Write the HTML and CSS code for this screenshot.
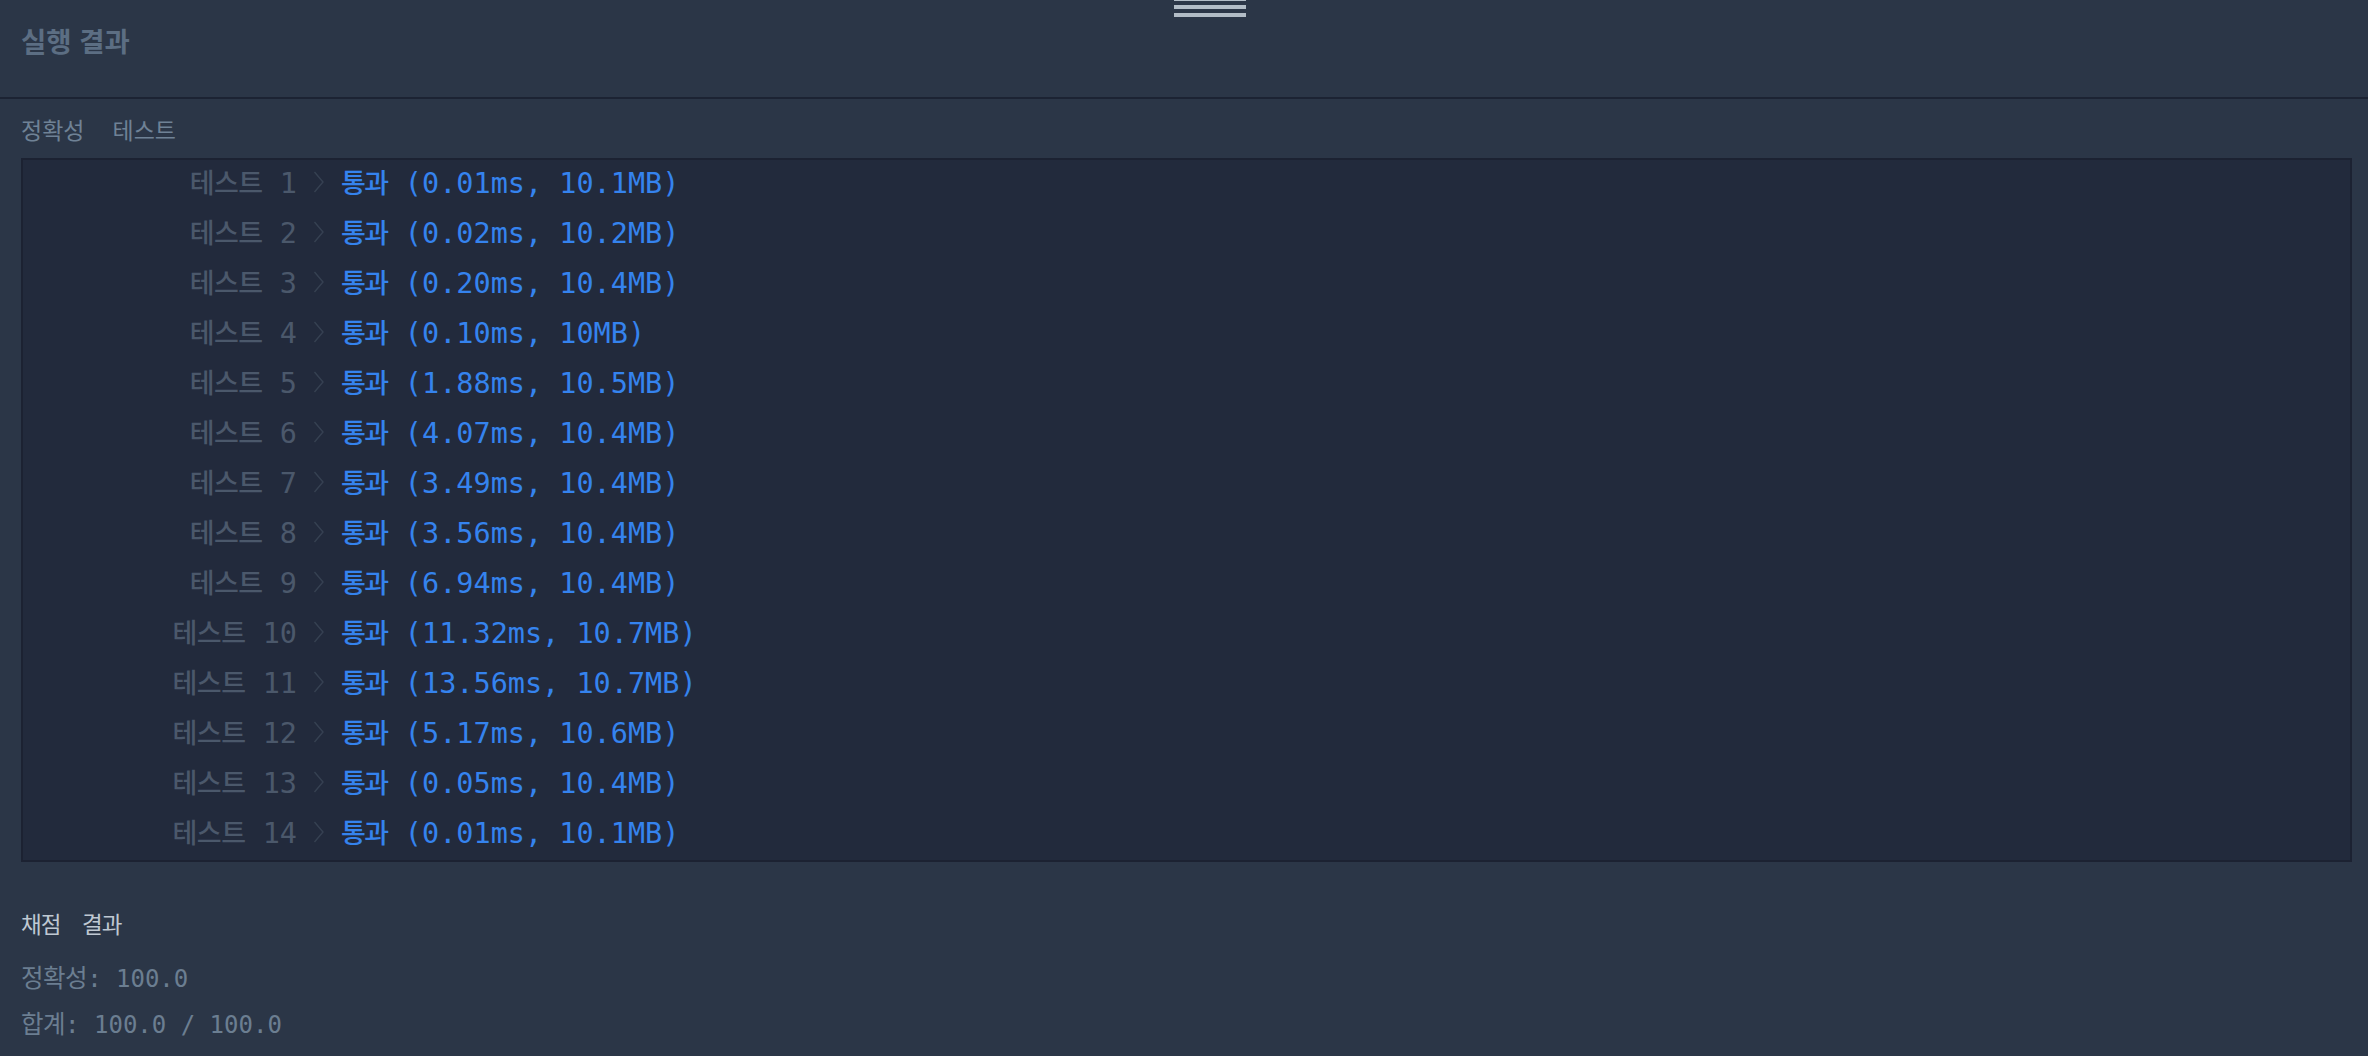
FILE: index.html
```html
<!DOCTYPE html>
<html lang="ko">
<head>
<meta charset="utf-8">
<title>실행 결과</title>
<link rel="stylesheet" href="styles.css">
</head>
<body>
<div class="handle"><i></i><i></i><i></i></div>
<header class="head"><h1 class="title">실행 결과</h1></header>
<nav class="tabs"><span class="tab">정확성</span><span class="tab">테스트</span></nav>
<section class="results">
  <div class="row"><span class="label"><span class="ko">테스트</span> 1</span><span class="chev"><svg width="12" height="22" viewBox="0 0 12 22"><polyline points="1.5,1 10,11 1.5,21"/></svg></span><span class="res"><span class="ko">통과</span> (0.01ms, 10.1MB)</span></div>
  <div class="row"><span class="label"><span class="ko">테스트</span> 2</span><span class="chev"><svg width="12" height="22" viewBox="0 0 12 22"><polyline points="1.5,1 10,11 1.5,21"/></svg></span><span class="res"><span class="ko">통과</span> (0.02ms, 10.2MB)</span></div>
  <div class="row"><span class="label"><span class="ko">테스트</span> 3</span><span class="chev"><svg width="12" height="22" viewBox="0 0 12 22"><polyline points="1.5,1 10,11 1.5,21"/></svg></span><span class="res"><span class="ko">통과</span> (0.20ms, 10.4MB)</span></div>
  <div class="row"><span class="label"><span class="ko">테스트</span> 4</span><span class="chev"><svg width="12" height="22" viewBox="0 0 12 22"><polyline points="1.5,1 10,11 1.5,21"/></svg></span><span class="res"><span class="ko">통과</span> (0.10ms, 10MB)</span></div>
  <div class="row"><span class="label"><span class="ko">테스트</span> 5</span><span class="chev"><svg width="12" height="22" viewBox="0 0 12 22"><polyline points="1.5,1 10,11 1.5,21"/></svg></span><span class="res"><span class="ko">통과</span> (1.88ms, 10.5MB)</span></div>
  <div class="row"><span class="label"><span class="ko">테스트</span> 6</span><span class="chev"><svg width="12" height="22" viewBox="0 0 12 22"><polyline points="1.5,1 10,11 1.5,21"/></svg></span><span class="res"><span class="ko">통과</span> (4.07ms, 10.4MB)</span></div>
  <div class="row"><span class="label"><span class="ko">테스트</span> 7</span><span class="chev"><svg width="12" height="22" viewBox="0 0 12 22"><polyline points="1.5,1 10,11 1.5,21"/></svg></span><span class="res"><span class="ko">통과</span> (3.49ms, 10.4MB)</span></div>
  <div class="row"><span class="label"><span class="ko">테스트</span> 8</span><span class="chev"><svg width="12" height="22" viewBox="0 0 12 22"><polyline points="1.5,1 10,11 1.5,21"/></svg></span><span class="res"><span class="ko">통과</span> (3.56ms, 10.4MB)</span></div>
  <div class="row"><span class="label"><span class="ko">테스트</span> 9</span><span class="chev"><svg width="12" height="22" viewBox="0 0 12 22"><polyline points="1.5,1 10,11 1.5,21"/></svg></span><span class="res"><span class="ko">통과</span> (6.94ms, 10.4MB)</span></div>
  <div class="row"><span class="label"><span class="ko">테스트</span> 10</span><span class="chev"><svg width="12" height="22" viewBox="0 0 12 22"><polyline points="1.5,1 10,11 1.5,21"/></svg></span><span class="res"><span class="ko">통과</span> (11.32ms, 10.7MB)</span></div>
  <div class="row"><span class="label"><span class="ko">테스트</span> 11</span><span class="chev"><svg width="12" height="22" viewBox="0 0 12 22"><polyline points="1.5,1 10,11 1.5,21"/></svg></span><span class="res"><span class="ko">통과</span> (13.56ms, 10.7MB)</span></div>
  <div class="row"><span class="label"><span class="ko">테스트</span> 12</span><span class="chev"><svg width="12" height="22" viewBox="0 0 12 22"><polyline points="1.5,1 10,11 1.5,21"/></svg></span><span class="res"><span class="ko">통과</span> (5.17ms, 10.6MB)</span></div>
  <div class="row"><span class="label"><span class="ko">테스트</span> 13</span><span class="chev"><svg width="12" height="22" viewBox="0 0 12 22"><polyline points="1.5,1 10,11 1.5,21"/></svg></span><span class="res"><span class="ko">통과</span> (0.05ms, 10.4MB)</span></div>
  <div class="row"><span class="label"><span class="ko">테스트</span> 14</span><span class="chev"><svg width="12" height="22" viewBox="0 0 12 22"><polyline points="1.5,1 10,11 1.5,21"/></svg></span><span class="res"><span class="ko">통과</span> (0.01ms, 10.1MB)</span></div>
</section>
<section class="score">
  <h2 class="score-title"><span class="ko">채점</span> <span class="ko">결과</span></h2>
  <p class="score-line"><span class="ko">정확성</span>: 100.0</p>
  <p class="score-line"><span class="ko">합계</span>: 100.0 / 100.0</p>
</section>
</body>
</html>
```
FILE: styles.css
```css
html, body {
  margin: 0;
  padding: 0;
}
body {
  width: 2368px;
  height: 1056px;
  overflow: hidden;
  background: #2b3647;
  font-family: "Noto Sans CJK KR", "Noto Sans", sans-serif;
  position: relative;
}
.handle {
  position: absolute;
  left: 1174px;
  top: -3px;
  width: 72px;
  display: flex;
  flex-direction: column;
  gap: 4px;
}
.handle i {
  display: block;
  height: 4px;
  background: #b2bcc6;
}
.head {
  height: 97px;
  border-bottom: 2px solid #1c2333;
  box-sizing: content-box;
  padding-left: 21px;
}
.title {
  margin: 0;
  padding-top: 26px;
  font-size: 27.5px;
  line-height: 28px;
  font-weight: 700;
  color: #5c6e83;
}
.tabs {
  display: flex;
  gap: 28px;
  padding-left: 21px;
  padding-top: 16px;
  height: 43px;
  font-size: 23px;
  line-height: 28px;
  color: #6f8296;
}
.results {
  margin: 0 16px 0 21px;
  border: 2px solid #1c2232;
  background: #222a3c;
  font-family: "DejaVu Sans Mono", "Noto Sans CJK KR", monospace;
  font-size: 28.5px;
}
.ko {
  font-family: "Noto Sans CJK KR", sans-serif;
  font-size: 27px;
  letter-spacing: -1.5px;
  font-weight: 500;
}
.label .ko {
  letter-spacing: -0.5px;
}
.row {
  display: grid;
  grid-template-columns: 274px 44px 1fr;
  height: 50px;
  align-items: start;
  line-height: 44px;
  white-space: pre;
}
.label {
  text-align: right;
  color: #4b586b;
}
.chev {
  display: flex;
  align-items: center;
  padding-left: 15.5px;
  height: 44px;
}
.chev polyline {
  fill: none;
  stroke: #364152;
  stroke-width: 1.4;
}
.res {
  color: #3583ee;
}
.score {
  padding-left: 21px;
  padding-top: 37px;
  font-family: "DejaVu Sans Mono", "Noto Sans CJK KR", monospace;
  font-size: 24px;
}
.score .ko {
  font-size: 24.5px;
  letter-spacing: -0.5px;
  font-weight: 400;
}
.score .score-title .ko {
  font-size: 22.5px;
  letter-spacing: -1px;
}
.score-title {
  margin: 0;
  font-weight: 400;
  line-height: 44px;
  color: #bfc8d2;
  white-space: pre;
}
.score-line {
  margin: 0;
  line-height: 44px;
  color: #6b7e91;
  white-space: pre;
}
.score-title + .score-line {
  margin-top: 10px;
}
```
